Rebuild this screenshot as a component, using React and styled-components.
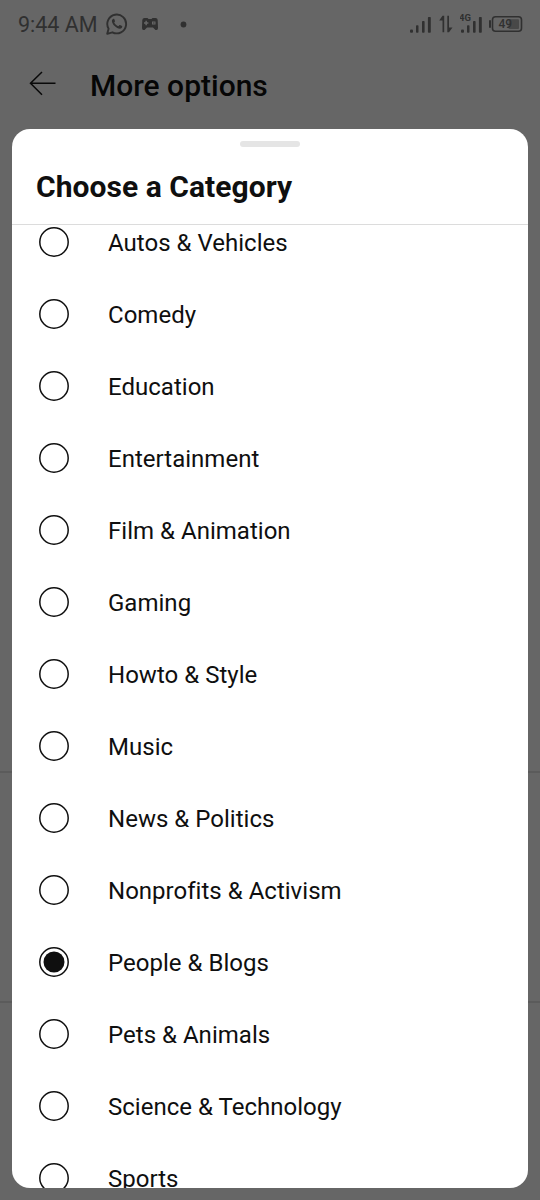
import React, { useState } from "react";
import styled, { createGlobalStyle } from "styled-components";

const GlobalStyle = createGlobalStyle`
  * { box-sizing: border-box; }
  body { margin: 0; background: #666; font-family: Roboto, "Liberation Sans", sans-serif; }
`;

const Screen = styled.div`
  position: relative;
  display: flex;
  flex-direction: column;
  width: 540px;
  height: 1200px;
  overflow: hidden;
  background: #666;
`;

const StatusBar = styled.header`
  display: flex;
  justify-content: space-between;
  height: 48px;
  padding: 0 17px 0 18px;
  color: #303030;
`;

const StatusGroup = styled.div`
  display: flex;
  align-items: center;
`;

const Clock = styled.span`
  width: 79px;
  margin-right: 9px;
  padding-top: 2px;
  font-size: 21.5px;
  line-height: 26px;
  white-space: nowrap;
`;

const StatusIcon = styled.svg`
  display: block;
  flex: none;
  margin-left: ${(p) => p.$gap || 0}px;
`;

const AppBar = styled.div`
  display: flex;
  align-items: center;
  height: 74px;
  padding: 0 28px;
  gap: 34px;
`;

const AppTitle = styled.h1`
  margin: 0;
  padding-top: 2px;
  color: #060606;
  font-size: 30px;
  font-weight: 500;
  line-height: 34px;
`;

const Section = styled.div`
  flex: none;
  height: ${(p) => p.$height}px;
  border-bottom: 2px solid #5b5b5b;
`;

const Sheet = styled.section`
  position: absolute;
  inset: 129px 12px 12px;
  display: flex;
  flex-direction: column;
  overflow: hidden;
  border-radius: 18px;
  background: #fff;
  color: #0f0f0f;
`;

const SheetHeader = styled.div`
  display: flex;
  flex: none;
  flex-direction: column;
  height: 96px;
  padding: 12px 24px 0;
  border-bottom: 1px solid #dcdcdc;
`;

const Handle = styled.div`
  align-self: center;
  width: 60px;
  height: 6px;
  border-radius: 3px;
  background: #e5e5e5;
`;

const SheetTitle = styled.h2`
  margin: 23px 0 0;
  font-size: 30px;
  font-weight: 700;
  line-height: 34px;
  letter-spacing: 0.05px;
  white-space: nowrap;
`;

const Options = styled.div`
  flex: 1;
  min-height: 0;
  overflow: hidden;
`;

const OptionList = styled.div`
  display: flex;
  flex-direction: column;
  margin-top: -19px;
`;

const Option = styled.div`
  display: flex;
  flex: none;
  align-items: center;
  height: 72px;
  padding-left: 27px;
  gap: 39px;
`;

const RadioMark = styled.svg`
  display: block;
  flex: none;
  width: 30px;
  height: 30px;
`;

const Label = styled.span`
  padding-top: 2px;
  font-size: 24px;
  line-height: 30px;
  letter-spacing: 0.02px;
  white-space: nowrap;
`;

const categories = [
  "Autos & Vehicles",
  "Comedy",
  "Education",
  "Entertainment",
  "Film & Animation",
  "Gaming",
  "Howto & Style",
  "Music",
  "News & Politics",
  "Nonprofits & Activism",
  "People & Blogs",
  "Pets & Animals",
  "Science & Technology",
  "Sports",
];

const NetworkText = styled.text`
  font: 700 9.5px Roboto, sans-serif;
  fill: currentColor;
`;

const BatteryText = styled.text`
  font: 500 12px Roboto, sans-serif;
  fill: currentColor;
`;

function Radio({ checked }) {
  return (
    <RadioMark viewBox="0 0 30 30">
      <circle cx="15" cy="15" r="14.2" fill="none" stroke="currentColor" strokeWidth="1.5" />
      {checked && <circle cx="15" cy="15" r="10.5" fill="currentColor" />}
    </RadioMark>
  );
}

function WhatsAppIcon() {
  return (
    <StatusIcon width="22" height="22" viewBox="0 0 22 22" fill="none">
      <path d="M1.2 20.8 2.6 15.7A9.4 9.4 0 1 1 6.4 19.3Z" stroke="currentColor" strokeWidth="1.9" strokeLinejoin="round" />
      <path d="M7.5 5.7c-.6 0-1.6.9-1.6 2.4 0 3.4 4.6 7.6 8 7.6 1.4 0 2.4-1 2.4-2.100 0-.5-.2-.6-2.500-1.600-.8-.3-1 1.400-1.700 1.200-1.500-.5-3.100-2-3.800-3.400-.3-.6.900-1 .7-1.700L8.200 6.100c-.1-.3-.3-.4-.7-.4Z" fill="currentColor" />
    </StatusIcon>
  );
}

function GamepadIcon() {
  return (
    <StatusIcon $gap={13} width="18" height="14" viewBox="0 0 18 14">
      <path
        fill="currentColor"
        fillRule="evenodd"
        d="M3.500 1h3l1 1h3l1-1h3Q16.500 1 16.700 3l.3 8q0 2-1.500 2h-1l-2.500-2.500h-6L3.500 13h-1Q1 13 1 11L1.300 3Q1.500 1 3.500 1ZM4.400 3.800v1.500H3v1.500h1.400v1.500h1.500V6.800h1.500V5.300H5.900V3.800ZM11 4.500h3.500v3H11Zm1.200 1v1h1.200v-1Z"
      />
    </StatusIcon>
  );
}

function SignalBars({ label, gap }) {
  return (
    <StatusIcon $gap={gap} width="24" height="24" viewBox="0 0 24 24" fill="currentColor">
      <rect x="1" y="17.5" width="3" height="3.2" rx="1" />
      <rect x="7" y="13.2" width="2.5" height="7.5" rx=".8" />
      <rect x="13" y="9" width="2.6" height="11.7" rx=".8" />
      <rect x="18.9" y="5" width="2.9" height="15.7" rx=".8" />
      {label && <NetworkText x="-1" y="8.6">{label}</NetworkText>}
    </StatusIcon>
  );
}

function DataArrows() {
  return (
    <StatusIcon $gap={6} width="14" height="18" viewBox="0 0 14 18" fill="currentColor">
      <path d="M.2 5.500 3.500.7h1.700v16.600H3.500V5.500ZM8.300.7H10v11.800h3.500L10 17.300H8.300Z" />
    </StatusIcon>
  );
}

function Battery() {
  return (
    <StatusIcon $gap={4} width="35" height="18" viewBox="0 0 35 18">
      <rect x="1" y="5" width="2" height="8" rx="1" fill="currentColor" />
      <rect x="4.500" y="1.700" width="29" height="14.600" rx="3" fill="none" stroke="currentColor" strokeWidth="1.600" />
      <rect x="20.500" y="4.300" width="10.500" height="9.600" rx="1" fill="#484848" />
      <BatteryText x="10.500" y="13.300">49</BatteryText>
    </StatusIcon>
  );
}

export default function App() {
  const [selected, setSelected] = useState("People & Blogs");
  return (
    <>
      <GlobalStyle />
      <Screen>
        <StatusBar>
          <StatusGroup>
            <Clock>9:44 AM</Clock>
            <WhatsAppIcon />
            <GamepadIcon />
            <StatusIcon $gap={20.5} width="7" height="7" viewBox="0 0 7 7">
              <circle cx="3.5" cy="3.5" r="2.9" fill="currentColor" />
            </StatusIcon>
          </StatusGroup>
          <StatusGroup>
            <SignalBars />
            <DataArrows />
            <SignalBars label="4G" gap={7} />
            <Battery />
          </StatusGroup>
        </StatusBar>
        <AppBar>
          <StatusIcon width="28" height="28" viewBox="0 0 28 28" fill="none">
            <path d="M14 1 2.500 12.300 14 23.800M2.500 12.300H27.500" stroke="#090909" strokeWidth="1.500" />
          </StatusIcon>
          <AppTitle>More options</AppTitle>
        </AppBar>
        <Section $height={651} />
        <Section $height={230} />
        <Sheet>
          <SheetHeader>
            <Handle />
            <SheetTitle>Choose a Category</SheetTitle>
          </SheetHeader>
          <Options>
            <OptionList role="radiogroup">
              {categories.map((name) => (
                <Option key={name} role="radio" aria-checked={name === selected} onClick={() => setSelected(name)}>
                  <Radio checked={name === selected} />
                  <Label>{name}</Label>
                </Option>
              ))}
            </OptionList>
          </Options>
        </Sheet>
      </Screen>
    </>
  );
}
